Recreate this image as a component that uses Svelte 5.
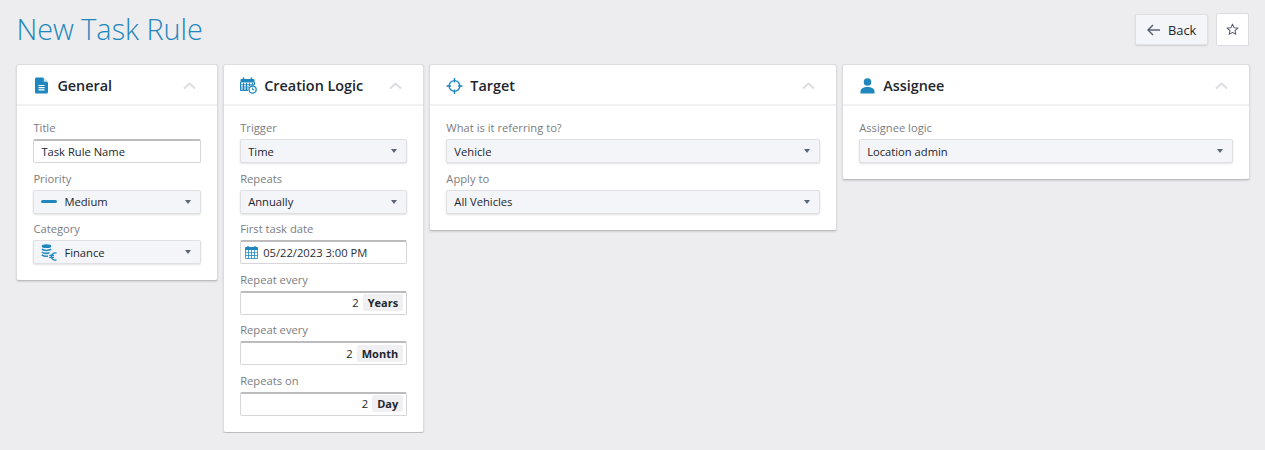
<script>
	const chevron = "M1 6.5 L6.5 1.5 L12 6.5";
</script>

<div class="page">
	<header class="top">
		<h1>New Task Rule</h1>
		<div class="actions">
			<button class="back">
				<svg width="13" height="12" viewBox="0 0 13 12"><path d="M6 1 L1 6 L6 11 M1 6 H13" fill="none" stroke="#5a6478" stroke-width="1.5" /></svg>
				Back
			</button>
			<button class="fav" aria-label="Favourite">
				<svg width="13" height="13" viewBox="0 0 14 14"><path d="M7 1.2 L8.7 5 L12.8 5.4 L9.7 8.1 L10.6 12.2 L7 10.1 L3.4 12.2 L4.3 8.1 L1.2 5.4 L5.3 5 Z" fill="none" stroke="#4f5a6e" stroke-width="1.1" stroke-linejoin="round" /></svg>
			</button>
		</div>
	</header>

	<div class="cards">
		<section class="card">
			<div class="head">
				<svg class="icon" width="14" height="17" viewBox="0 0 14 17">
					<path d="M1.5 0.5 H8.5 L13.5 5.5 V15 Q13.5 16.5 12 16.5 H1.5 Q0.5 16.5 0.5 15 V2 Q0.5 0.5 1.5 0.5 Z" fill="#1f87bd" />
					<path d="M9.3 0.5 L13.5 4.7 H9.3 Z" fill="#cfe3ef" />
					<path d="M4 8.5 H10 M4 10.7 H10 M4 12.9 H10" stroke="#fff" stroke-width="1.2" />
				</svg>
				<h2>General</h2>
				<svg class="chev" width="13" height="8" viewBox="0 0 13 8"><path d={chevron} /></svg>
			</div>
			<div class="body">
				<div class="field">
					<span class="label">Title</span>
					<div class="input">Task Rule Name</div>
				</div>
				<div class="field">
					<span class="label">Priority</span>
					<div class="select">
						<svg class="pre" width="16" height="3" viewBox="0 0 16 3"><rect width="16" height="3" rx="1.5" fill="#1f87bd" /></svg>
						<span class="val">Medium</span><i class="caret"></i>
					</div>
				</div>
				<div class="field">
					<span class="label">Category</span>
					<div class="select">
						<svg class="pre" width="16" height="17" viewBox="0 0 16 17" fill="none" stroke="#1f87bd">
							<ellipse cx="5.5" cy="2.2" rx="4.8" ry="1.9" fill="#1f87bd" stroke="none" />
							<path d="M0.8 5.2 C3 6.8 8 6.8 10.2 5.2 M0.8 8 C3 9.6 6 9.6 8.5 8.8 M0.8 10.8 C3 12.4 5 12.4 7 12" stroke-width="1.5" />
							<path d="M15.5 9.2 A3.6 3.6 0 1 0 15.5 15.8 M8.2 11.4 H13 M8.2 13.4 H13" stroke-width="1.4" />
						</svg>
						<span class="val">Finance</span><i class="caret"></i>
					</div>
				</div>
			</div>
		</section>

		<section class="card">
			<div class="head">
				<svg class="icon" width="17" height="17" viewBox="0 0 17 17">
					<path d="M0.5 3 Q0.5 2 1.5 2 H13.5 Q14.5 2 14.5 3 V5.5 H0.5 Z" fill="#1f87bd" />
					<path d="M3.5 0.5 V3 M11.5 0.5 V3" stroke="#1f87bd" stroke-width="1.6" />
					<path d="M0.5 5 V13.5 H8 M14.5 5 V8 M3.5 6 V13 M6.5 6 V13 M9.5 6 V9 M12.5 6 V8 M1 7.8 H14 M1 10 H9 M1 12 H8" stroke="#1f87bd" stroke-width="1" fill="none" />
					<circle cx="12.6" cy="12.6" r="3.6" fill="#fff" stroke="#1f87bd" stroke-width="1.3" />
					<path d="M12.6 10.6 V12.8 H14.4" fill="none" stroke="#1f87bd" stroke-width="1" />
				</svg>
				<h2>Creation Logic</h2>
				<svg class="chev" width="13" height="8" viewBox="0 0 13 8"><path d={chevron} /></svg>
			</div>
			<div class="body">
				<div class="field">
					<span class="label">Trigger</span>
					<div class="select"><span class="val">Time</span><i class="caret"></i></div>
				</div>
				<div class="field">
					<span class="label">Repeats</span>
					<div class="select"><span class="val">Annually</span><i class="caret"></i></div>
				</div>
				<div class="field">
					<span class="label">First task date</span>
					<div class="input date">
						<svg width="13" height="13" viewBox="0 0 13 13">
							<path d="M0 2 Q0 1 1 1 H12 Q13 1 13 2 V4 H0 Z" fill="#1f87bd" />
							<path d="M3 0 V2 M10 0 V2" stroke="#1f87bd" stroke-width="1.4" />
							<path d="M0.5 4 V12.5 H12.5 V4 M3.5 4 V12.5 M6.5 4 V12.5 M9.5 4 V12.5 M0.5 6.7 H12.5 M0.5 9.5 H12.5" fill="none" stroke="#1f87bd" stroke-width="1" opacity="0.8" />
						</svg>
						05/22/2023 3:00 PM
					</div>
				</div>
				<div class="field">
					<span class="label">Repeat every</span>
					<div class="input num">2 <b>Years</b></div>
				</div>
				<div class="field">
					<span class="label">Repeat every</span>
					<div class="input num">2 <b>Month</b></div>
				</div>
				<div class="field">
					<span class="label">Repeats on</span>
					<div class="input num">2 <b>Day</b></div>
				</div>
			</div>
		</section>

		<section class="card">
			<div class="head">
				<svg class="icon" width="16" height="16" viewBox="0 0 16 16" fill="none" stroke="#1f87bd" stroke-width="1.4">
					<circle cx="8" cy="8" r="5.4" />
					<path d="M8 0 V4.5 M8 11.5 V16 M0 8 H4.5 M11.5 8 H16" />
				</svg>
				<h2>Target</h2>
				<svg class="chev" width="13" height="8" viewBox="0 0 13 8"><path d={chevron} /></svg>
			</div>
			<div class="body">
				<div class="field">
					<span class="label">What is it referring to?</span>
					<div class="select"><span class="val">Vehicle</span><i class="caret"></i></div>
				</div>
				<div class="field">
					<span class="label">Apply to</span>
					<div class="select"><span class="val">All Vehicles</span><i class="caret"></i></div>
				</div>
			</div>
		</section>

		<section class="card">
			<div class="head">
				<svg class="icon" width="15" height="16" viewBox="0 0 15 16">
					<circle cx="7.5" cy="4" r="3.8" fill="#1f87bd" />
					<path d="M0.5 15.5 V13.5 C0.5 10.5 3.5 9 7.5 9 C11.5 9 14.5 10.5 14.5 13.5 V15.5 Z" fill="#1f87bd" />
				</svg>
				<h2>Assignee</h2>
				<svg class="chev" width="13" height="8" viewBox="0 0 13 8"><path d={chevron} /></svg>
			</div>
			<div class="body">
				<div class="field">
					<span class="label">Assignee logic</span>
					<div class="select"><span class="val">Location admin</span><i class="caret"></i></div>
				</div>
			</div>
		</section>
	</div>
</div>

<style>
	:global(body) {
		background: #edecef;
		font-family: "Open Sans", sans-serif;
		color: #22262e;
	}

	.page {
		padding: 13px 15px 0 16.4px;
	}

	.top {
		display: flex;
		justify-content: space-between;
		height: 51px;
	}

	h1 {
		margin: 0;
		font-size: 28.8px;
		font-weight: 300;
		line-height: 32px;
		color: #1f87bd;
	}

	.actions {
		display: flex;
		gap: 8px;
		align-items: flex-start;
		margin-top: 1px;
		margin-right: 1px;
	}

	button {
		font-family: inherit;
		color: #22262e;
		cursor: pointer;
	}

	.back {
		display: flex;
		align-items: center;
		gap: 8px;
		width: 73px;
		height: 31px;
		padding: 0 0 0 11px;
		font-size: 12.8px;
		background: #f4f5f8;
		border: 1px solid #dfdfe3;
		border-radius: 2px;
		box-shadow: 0 1px 2px rgba(0, 0, 0, 0.12);
	}

	.fav {
		display: flex;
		align-items: center;
		justify-content: center;
		width: 33px;
		height: 33px;
		margin-top: -1px;
		padding: 0;
		background: #fff;
		border: 1px solid #dcdce0;
		border-radius: 2px;
	}

	.cards {
		display: grid;
		grid-template-columns: 201.6px 201px 407.6px 407.6px;
		gap: 5.2px;
		align-items: start;
	}

	.card {
		background: #fff;
		border: 1px solid #dcdcdf;
		border-bottom-color: #bdbdc0;
		border-radius: 3px;
		box-shadow: 0 1px 2px rgba(0, 0, 0, 0.12);
	}

	.head {
		display: flex;
		align-items: center;
		box-sizing: border-box;
		height: 41px;
		padding: 2px 21px 0 16px;
		border-bottom: 2px solid #f1f1f3;
	}

	.icon {
		flex: none;
		width: 17px;
		margin-right: 7px;
	}

	h2 {
		flex: 1;
		margin: 0;
		font-size: 14.4px;
		font-weight: 600;
		color: #22262e;
	}

	.chev path {
		fill: none;
		stroke: #dcdde0;
		stroke-width: 2;
	}

	.body {
		padding: 15px 16px 16px;
	}

	.field + .field {
		margin-top: 8.5px;
	}

	.label {
		display: block;
		height: 18px;
		font-size: 11.2px;
		line-height: 14px;
		color: #7b7d82;
	}

	.input,
	.select {
		display: flex;
		align-items: center;
		box-sizing: border-box;
		height: 24px;
		font-size: 11.2px;
		border-radius: 2px;
	}

	.input {
		padding: 0 8px 0 7px;
		background: #fff;
		border: 1px solid #d6d6d9;
		border-top: 2px solid #bcbcbf;
	}

	.select {
		padding: 0 8px 0 7px;
		background: #f4f5f8;
		border: 1px solid #e0e0e4;
		box-shadow: 0 1px 2px rgba(0, 0, 0, 0.12);
	}

	.date {
		gap: 5px;
		padding-left: 4px;
		color: #2b2f36;
	}

	.num {
		justify-content: flex-end;
		gap: 4px;
		padding-right: 3px;
		padding-bottom: 1px;
	}

	.num b {
		padding: 0 5px;
		font-size: 11px;
		line-height: 17px;
		font-weight: 700;
		background: #f0f0f3;
		border-radius: 2px;
	}

	.pre {
		flex: none;
		width: 16px;
		margin-right: 7px;
	}

	.val {
		flex: 1;
	}

	.caret {
		width: 0;
		height: 0;
		margin-right: 1px;
		border-left: 3.5px solid transparent;
		border-right: 3.5px solid transparent;
		border-top: 4px solid #5c6478;
	}
</style>
